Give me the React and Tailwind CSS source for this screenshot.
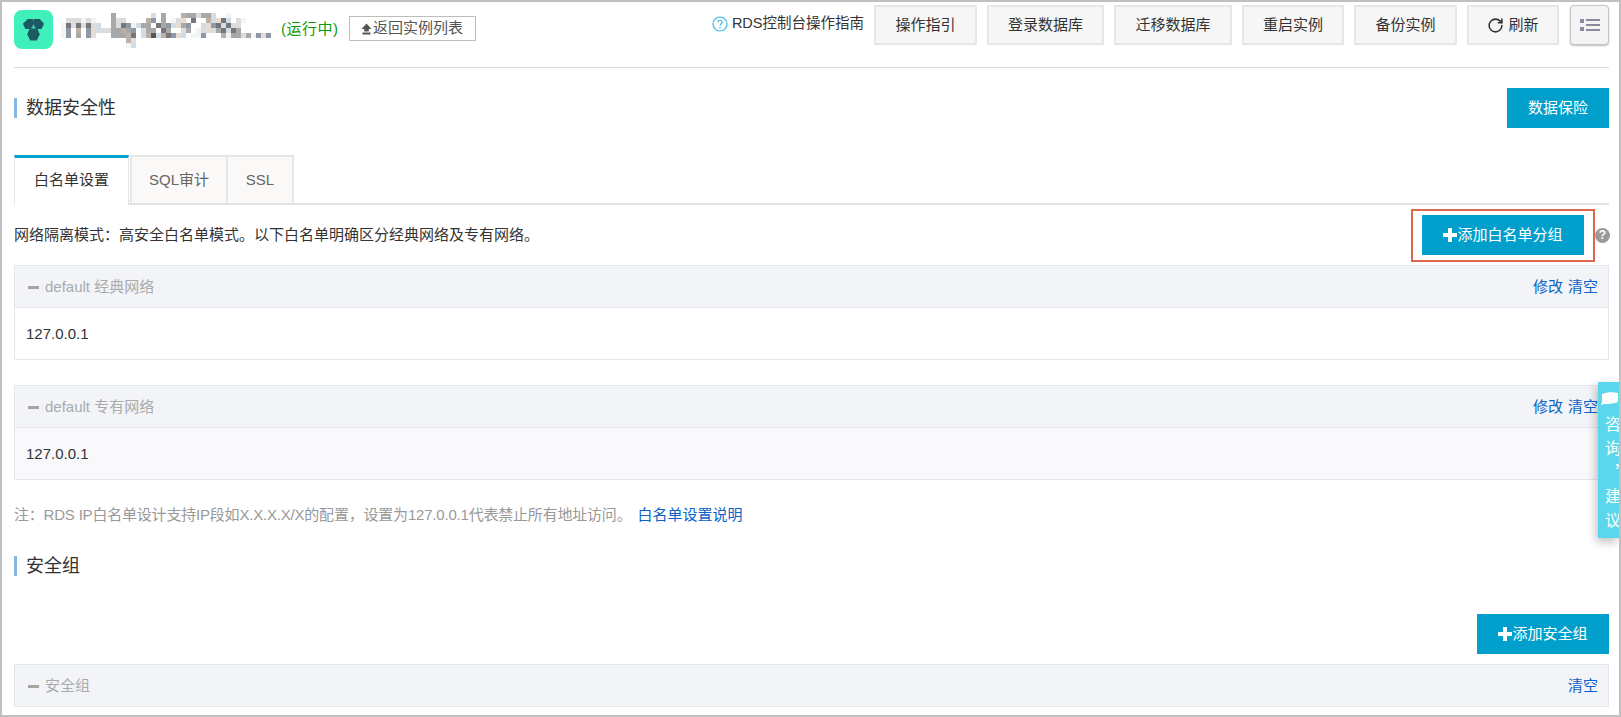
import React from "react";
import { RotateCw } from "lucide-react";

const MOSAIC = [
  "..........g.......l.g...Tgglggb..p........",
  ".lllplp...gll....Tu.g.plt.d..Tbtdb.lp.....",
  "pdldldlb..gldupbgg.dgubtgu..btudbdll.....",
  "pu.T.utbllggTgu.bgg.dg..lg.pbtlgdbdg......",
  "pu.g.ut...gggTd.bTkbTdutb.ppu...Tpgglgputu",
  ".............Tl",
  ".............pb",
];

const SHADES = {
  p: "#f4f4f2",
  l: "#dcdcdc",
  b: "#d2dde6",
  t: "#e6dcd2",
  T: "#bcb0a6",
  g: "#a8a8a8",
  u: "#8e98a6",
  d: "#77767a",
  k: "#55555a",
};

const BlurredName = () => (
  <svg width="210" height="35" className="shrink-0">
    {MOSAIC.map((row, y) =>
      row.split("").map((c, x) =>
        c === "." ? null : <rect key={x + "-" + y} x={x * 5} y={y * 5} width="5" height="5" fill={SHADES[c]} />
      )
    )}
  </svg>
);

const Logo = () => (
  <div className="w-[39px] h-[39px] rounded-lg bg-[#3ff0ba] flex items-center justify-center shrink-0">
    <svg width="23" height="23" viewBox="0 0 24 24" fill="#1b5a62">
      <polygon points="6,1 11.5,1 13,6 11,11.5 3.5,11.5 1,6" />
      <polygon points="12.5,1 18.5,1 23,6 20.5,11.5 13,11.5 11,6" />
      <polygon points="8,11 16,11 18.5,17 15.5,23.5 8.5,23.5 5.5,17" />
      <polygon points="12,6.5 14.5,11 9.5,11" fill="#45c4a8" />
    </svg>
  </div>
);

const TopButton = ({ width, children }) => (
  <button className={`${width} h-10 flex items-center justify-center gap-1 bg-[#f6f6f6] border-2 border-[#e6e6e6] text-[15px] text-[#333]`}>
    {children}
  </button>
);

const SectionTitle = ({ children }) => (
  <div className="border-l-[3px] border-[#85b8e2] pl-[9px] h-5 flex items-center text-lg text-[#333]">{children}</div>
);

const PlusLabel = ({ children }) => (
  <span className="flex items-center justify-center text-[15px] text-white">
    <span className="relative w-[14px] h-[14px]">
      <span className="absolute left-0 top-[5px] w-[14px] h-1 bg-white"></span>
      <span className="absolute left-[5px] top-0 w-1 h-[14px] bg-white"></span>
    </span>
    {children}
  </span>
);

const Panel = ({ title, actions, children, bodyClass }) => (
  <div className="border border-[#e3e6eb]">
    <div className="h-[41px] pt-px bg-[#f3f4f8] flex items-center justify-between pl-[13px] pr-[10px] text-[15px]">
      <span className="flex items-center text-[#aaa]">
        <span className="w-[11px] h-[3px] bg-[#a5a5a5] mr-[6px]"></span>
        {title}
      </span>
      <span className="flex gap-[5px] text-[#0a62c9]">
        {actions.map((a) => (
          <a key={a}>{a}</a>
        ))}
      </span>
    </div>
    {children && (
      <div className={`h-[52px] pt-px border-t border-[#e3e6eb] flex items-center pl-[11px] text-[15px] text-[#333] ${bodyClass}`}>
        {children}
      </div>
    )}
  </div>
);

export default function App() {
  return (
    <div className="relative w-[1621px] h-[717px] overflow-hidden bg-white border-2 border-[#c0c0c0] font-['Liberation_Sans','Noto_Sans_CJK_SC',sans-serif]">
      <div className="pl-3 pr-[10px]">
        {/* header */}
        <div className="h-[66px] border-b border-[#dcdcdc] flex justify-between">
          <div className="flex items-start pt-2">
            <Logo />
            <div className="ml-2 mt-[3px]">
              <BlurredName />
            </div>
            <span className="ml-[10px] mt-[8px] text-[15px] tracking-[0.5px] text-[#0a9a0a]">(运行中)</span>
            <button className="ml-[10px] mt-[6px] w-[127px] h-[25px] border-[1.5px] border-[#bdbdbd] flex items-center justify-center text-[15px] text-[#555]">
              <svg width="11" height="12" viewBox="0 0 11 12" fill="#555" className="mr-px">
                <path d="M5.5 0.5 L10.5 6 L7.8 6 L7.8 8.5 L3.2 8.5 L3.2 6 L0.5 6 Z" />
                <rect x="1.5" y="9.5" width="8" height="2" />
              </svg>
              返回实例列表
            </button>
          </div>
          <div className="flex items-start pt-[3px]">
            <span className="flex items-center h-[38px] text-[14.5px] text-[#333] mr-[10px]">
              <svg width="16" height="16" viewBox="0 0 16 16" fill="none" className="mr-1">
                <circle cx="8" cy="8" r="7" stroke="#39b8e0" strokeWidth="1.2" />
                <path d="M5.8 6.2 C5.8 3.6 10.2 3.6 10.2 6.2 C10.2 7.8 8 7.8 8 9.8" stroke="#39b8e0" strokeWidth="1.2" />
                <circle cx="8" cy="11.8" r="0.8" fill="#39b8e0" />
              </svg>
              RDS控制台操作指南
            </span>
            <div className="flex gap-[10px]">
              <TopButton width="w-[103px]">操作指引</TopButton>
              <TopButton width="w-[117px]">登录数据库</TopButton>
              <TopButton width="w-[118px]">迁移数据库</TopButton>
              <TopButton width="w-[102px]">重启实例</TopButton>
              <TopButton width="w-[103px]">备份实例</TopButton>
              <TopButton width="w-[92px]">
                <RotateCw size={17} strokeWidth={2.2} color="#333" />
                刷新
              </TopButton>
              <button className="w-[39px] h-10 flex items-center justify-center rounded-sm border border-[#c4c4c4] bg-[#f4f4f4] shadow-[0_1px_2px_rgba(0,0,0,0.25)] ml-px">
                <svg width="20" height="14" viewBox="0 0 20 14" fill="#8a8a9e">
                  <rect x="0" y="1" width="4" height="4" />
                  <rect x="0" y="9" width="4" height="4" />
                  <rect x="6" y="1" width="14" height="2" />
                  <rect x="6" y="6" width="14" height="2" />
                  <rect x="6" y="11" width="14" height="2" />
                </svg>
              </button>
            </div>
          </div>
        </div>

        {/* data security title */}
        <div className="mt-5 flex items-center justify-between">
          <SectionTitle>数据安全性</SectionTitle>
          <button className="w-[102px] h-10 bg-[#009fcc] text-[15px] text-white">数据保险</button>
        </div>

        {/* tabs */}
        <div className="mt-[27px] h-[50px] flex border-b-2 border-[#e3e3e3] text-[15px]">
          <div className="w-[115px] h-[50px] pb-[3px] border-t-[3px] border-t-[#00a4cc] border-x border-x-[#e3e3e3] bg-white text-[#333] flex items-center justify-center">
            白名单设置
          </div>
          <div className="w-[98px] border-2 border-b-0 border-[#e6e6e6] bg-[#faf9f7] text-[#666] flex items-center justify-center ml-px">
            SQL审计
          </div>
          <div className="w-[66px] border-2 border-b-0 border-l-0 border-[#e6e6e6] bg-[#faf9f7] text-[#666] flex items-center justify-center">
            SSL
          </div>
        </div>

        {/* whitelist note + add button */}
        <div className="mt-[10px] h-10 flex items-center justify-between">
          <span className="pt-px text-[15px] text-[#333]">网络隔离模式：高安全白名单模式。以下白名单明确区分经典网络及专有网络。</span>
          <div className="flex items-center -mr-px">
            <button className="relative w-[162px] h-10 bg-[#009fcc]">
              <PlusLabel>添加白名单分组</PlusLabel>
              <span className="absolute -left-[11px] -right-[11px] -top-[6px] -bottom-[7px] border-2 border-[#dc6a4a]"></span>
            </button>
            <span className="ml-[11px] w-[15px] h-[15px] rounded-full bg-[#999] text-white text-[12px] font-bold flex items-center justify-center">?</span>
          </div>
        </div>

        <div className="mt-[10px]">
          <Panel title="default 经典网络" actions={["修改", "清空"]} bodyClass="bg-white">
            127.0.0.1
          </Panel>
        </div>
        <div className="mt-[25px]">
          <Panel title="default 专有网络" actions={["修改", "清空"]} bodyClass="bg-[#f9f9fb]">
            127.0.0.1
          </Panel>
        </div>

        <p className="mt-[23px] h-6 flex items-center text-[15px] text-[#999]">
          <span className="tracking-[-0.2px]">注：RDS IP白名单设计支持IP段如X.X.X.X/X的配置，设置为127.0.0.1代表禁止所有地址访问。</span>
          <a className="ml-[6px] text-[#0a62c9]">白名单设置说明</a>
        </p>

        <div className="mt-[29px]">
          <SectionTitle>安全组</SectionTitle>
        </div>

        <div className="mt-[38px] flex justify-end">
          <button className="w-[132px] h-10 bg-[#009fcc]">
            <PlusLabel>添加安全组</PlusLabel>
          </button>
        </div>

        <div className="mt-[10px]">
          <Panel title="安全组" actions={["清空"]} />
        </div>
      </div>

      {/* floating feedback tab */}
      <div className="absolute right-0 top-[380px] w-[21px] h-[156px] bg-[#5cd6ec] shadow-[-2px_4px_10px_rgba(0,0,0,0.25)] overflow-hidden text-white">
        <svg width="18" height="14" viewBox="0 0 18 14" fill="#fff" className="absolute left-[3px] top-[10px]">
          <path d="M1 2 C6 0 12 0 17 1 L17 10 C12 12 6 12 3 12 L0 13 L1 10 Z" />
        </svg>
        <div className="absolute left-[5px] top-[34px] text-base leading-4 tracking-[8px] [writing-mode:vertical-rl] whitespace-nowrap">
          咨询，建议
        </div>
      </div>
    </div>
  );
}
